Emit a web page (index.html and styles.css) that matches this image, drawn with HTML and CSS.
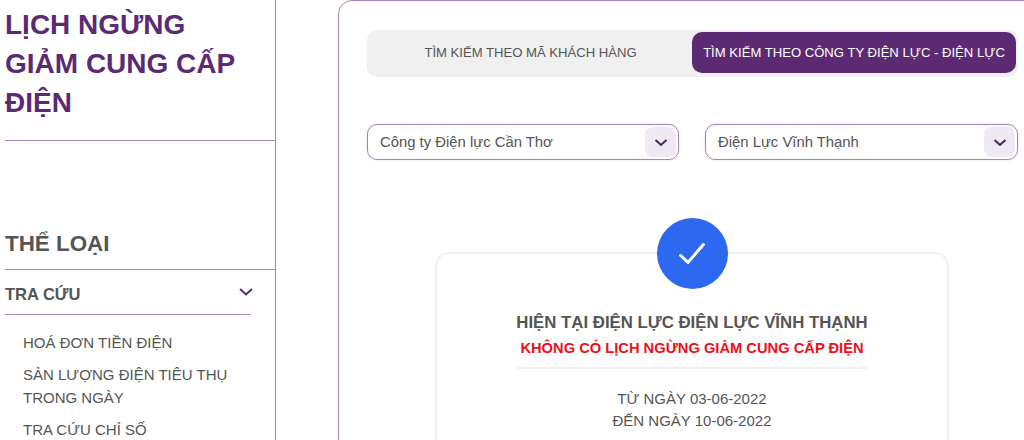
FILE: index.html
```html
<!DOCTYPE html>
<html lang="vi">
<head>
    <meta charset="utf-8">
    <title>Lịch ngừng giảm cung cấp điện</title>
    <link rel="stylesheet" href="styles.css">
</head>
<body>
<div class="page">
    <aside class="side">
        <h1 class="side-title">LỊCH NGỪNG GIẢM CUNG CẤP ĐIỆN</h1>
        <h2 class="cat-title">THỂ LOẠI</h2>
        <div class="cat-head">
            <span>TRA CỨU</span>
            <svg class="cat-arrow" width="14" height="8" viewBox="0 0 14 8"><path d="M1 1l6 5.500L13 1" fill="none" stroke="#5c2a72" stroke-width="2"/></svg>
        </div>
        <ul class="cat-list">
            <li>HOÁ ĐƠN TIỀN ĐIỆN</li>
            <li>SẢN LƯỢNG ĐIỆN TIÊU THỤ TRONG NGÀY</li>
            <li>TRA CỨU CHỈ SỐ</li>
        </ul>
    </aside>
    <main class="panel">
        <div class="tabs">
            <div class="tab">TÌM KIẾM THEO MÃ KHÁCH HÀNG</div>
            <div class="tab active">TÌM KIẾM THEO CÔNG TY ĐIỆN LỰC - ĐIỆN LỰC</div>
        </div>
        <div class="selects">
            <div class="select first">
                <span class="select-text">Công ty Điện lực Cần Thơ</span>
                <span class="select-btn"><svg width="14" height="8" viewBox="0 0 14 8"><path d="M1.500 1l5.500 5 5.500-5" fill="none" stroke="#4a2360" stroke-width="2"/></svg></span>
            </div>
            <div class="select">
                <span class="select-text">Điện Lực Vĩnh Thạnh</span>
                <span class="select-btn"><svg width="14" height="8" viewBox="0 0 14 8"><path d="M1.500 1l5.500 5 5.500-5" fill="none" stroke="#4a2360" stroke-width="2"/></svg></span>
            </div>
        </div>
        <div class="result">
            <div class="check">
                <svg width="26" height="21" viewBox="0 0 26 21"><path d="M1.600 12.500L9 19.400 24.400 1.600" fill="none" stroke="#fff" stroke-width="3" stroke-linecap="round" stroke-linejoin="round"/></svg>
            </div>
            <div class="result-body">
                <div class="result-title">HIỆN TẠI ĐIỆN LỰC ĐIỆN LỰC VĨNH THẠNH</div>
                <div class="result-note">KHÔNG CÓ LỊCH NGỪNG GIẢM CUNG CẤP ĐIỆN</div>
                <div class="result-dates">
                    <div>TỪ NGÀY 03-06-2022</div>
                    <div>ĐẾN NGÀY 10-06-2022</div>
                </div>
            </div>
        </div>
    </main>
</div>
</body>
</html>
```

FILE: styles.css
```css
html, body {
    margin: 0;
    height: 440px;
    overflow: hidden;
    background-color: #fff;
}

body {
    font-family: "Liberation Sans", Arial, sans-serif;
    color: #555;
}

.page {
    display: flex;
    align-items: flex-start;
    width: 1024px;
    height: 440px;
    overflow: hidden;
}

/* sidebar */
.side {
    box-sizing: border-box;
    width: 276px;
    height: 440px;
    flex: none;
    padding-left: 5px;
    overflow: hidden;
    border-right: 1px solid #a583b8;
}

.side-title {
    margin: 0;
    padding: 5px 30px 18px 0;
    font-size: 28px;
    line-height: 39px;
    font-weight: bold;
    color: #5c2a72;
    border-bottom: 1px solid #a583b8;
}

.cat-title {
    margin: 88px 0 0;
    padding-bottom: 11px;
    font-size: 22.400px;
    line-height: 29px;
    font-weight: bold;
    color: #555;
    border-bottom: 1px solid #a583b8;
}

.cat-head {
    display: flex;
    align-items: center;
    justify-content: space-between;
    box-sizing: border-box;
    width: 245px;
    height: 45px;
    padding-top: 4px;
    font-size: 16.500px;
    font-weight: bold;
    border-bottom: 1px solid #a583b8;
}

.cat-arrow {
    margin-right: -3px;
    margin-bottom: 4px;
}

.cat-list {
    list-style: none;
    margin: 16px 0 0;
    padding: 0 15px 0 18px;
    font-size: 15px;
    line-height: 23px;
}

.cat-list li {
    margin-bottom: 9px;
}

/* main panel */
.panel {
    box-sizing: border-box;
    width: 720px;
    height: 600px;
    flex: none;
    margin-left: 62px;
    padding: 29px 0 0 28px;
    border: 1px solid #a583b8;
    border-radius: 14px 14px 0 0;
}

.tabs {
    display: flex;
    box-sizing: border-box;
    width: 651px;
    height: 47px;
    padding: 2px 2px 4px;
    background-color: #f0f0f0;
    border-radius: 10px;
}

.tab {
    flex: 1;
    display: flex;
    align-items: center;
    justify-content: center;
    font-size: 13.100px;
}

.tab.active {
    flex: none;
    width: 324px;
    color: #fff;
    background-color: #5c2a72;
    border-radius: 10px;
}

.selects {
    display: flex;
    justify-content: space-between;
    width: 651px;
    margin-top: 47px;
}

.select {
    display: flex;
    align-items: center;
    justify-content: space-between;
    box-sizing: border-box;
    width: 313px;
    height: 36px;
    padding: 2px 2px 2px 12px;
    font-size: 14.850px;
    border: 1px solid #a583b8;
    border-radius: 10px;
    box-shadow: 0 0 3px rgba(92, 42, 114, 0.15);
}

.select.first {
    width: 312px;
}

.select-text {
    margin-bottom: 1px;
}

.select-btn {
    display: flex;
    align-items: center;
    justify-content: center;
    width: 31px;
    height: 30px;
    padding-top: 1px;
    box-sizing: border-box;
    background-color: #efe9f3;
    border-radius: 8px;
}

/* result card */
.result {
    width: 514px;
    margin: 58px 0 0 68px;
}

.check {
    position: relative;
    display: flex;
    align-items: center;
    justify-content: center;
    width: 71px;
    height: 71px;
    margin: 0 auto -37px;
    background-color: #2d68f0;
    border-radius: 50%;
}

.result-body {
    box-sizing: border-box;
    height: 300px;
    padding-top: 58px;
    text-align: center;
    border: 2px solid #f0f0f0;
    border-radius: 14px;
}

.result-title {
    font-size: 16.800px;
    line-height: 22px;
    font-weight: bold;
}

.result-note {
    font-size: 14.700px;
    line-height: 22px;
    margin-top: 3px;
    font-weight: bold;
    color: #ee0f1a;
}

.result-dates {
    width: 352px;
    margin: 8px auto 0;
    padding-top: 19px;
    font-size: 15px;
    line-height: 22px;
    border-top: 2px solid #f0f0f0;
}
```
